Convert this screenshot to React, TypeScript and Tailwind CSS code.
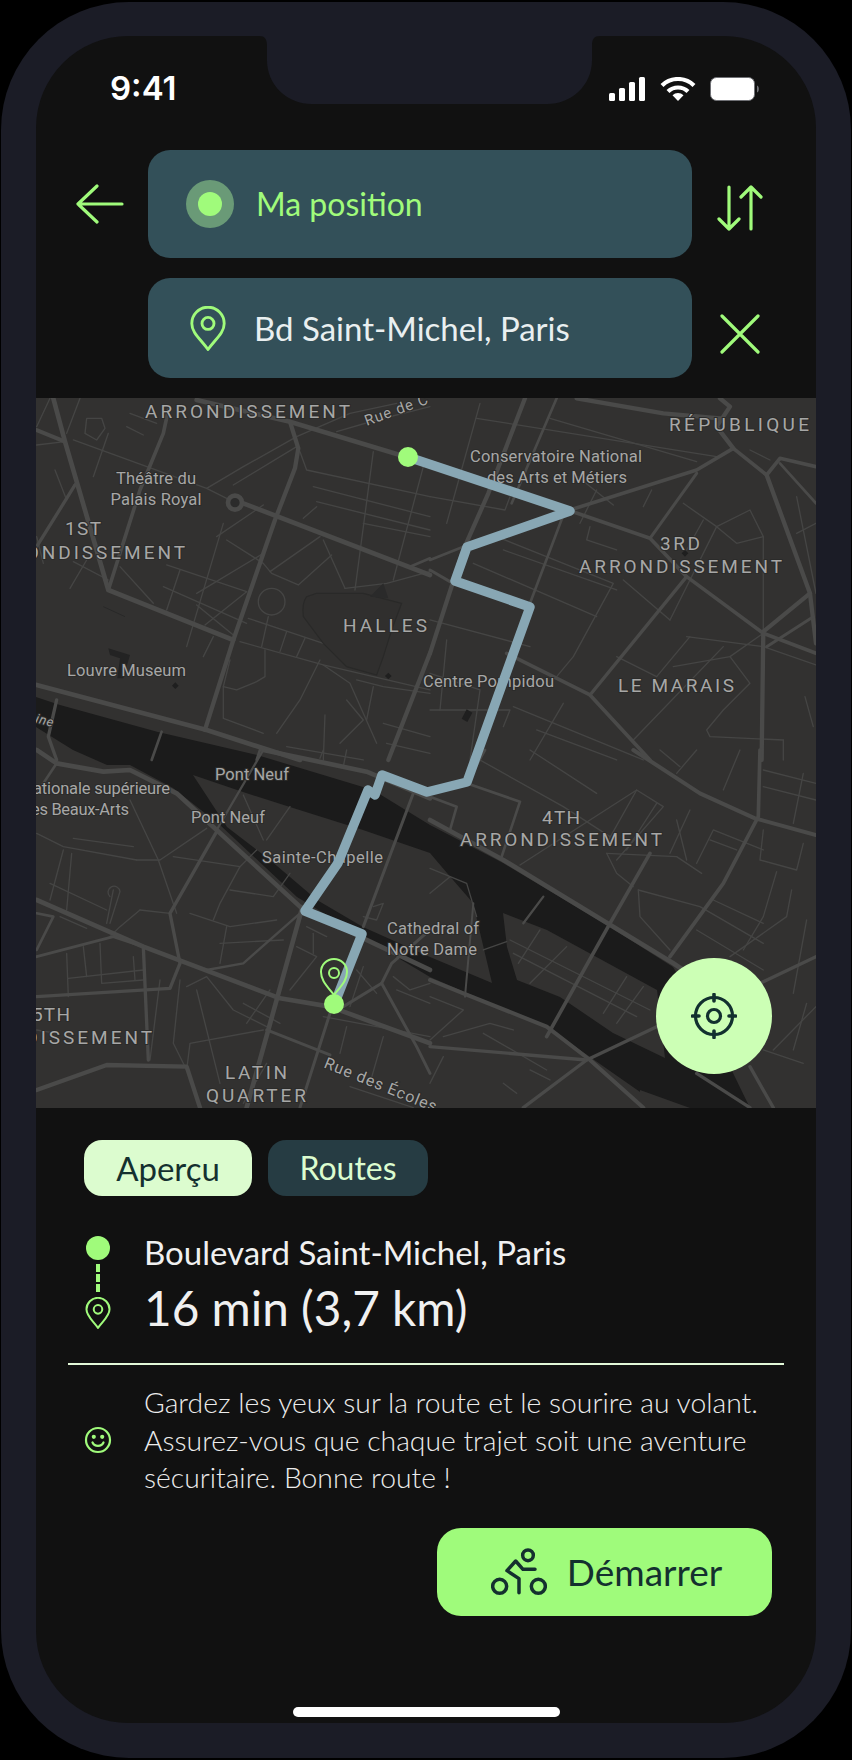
const MAJOR = "#4a4a49";
const MINOR = "#454544";

type Layer = { o: [number, number]; thick: [string, number][]; thin: string[] };

const layers: Layer[] = [
  {
    o: [30, 390],
    thick: [
      ["M70 25 L105 155 L235 600 L610 750", 14],
      ["M20 120 L105 155", 12],
      ["M415 60 L400 130 L330 300 L235 600", 11],
      ["M135 285 L20 470", 10],
      ["M500 30 L780 95 L1110 195", 14],
      ["M780 95 L805 175 L795 235 L735 390 L610 750 L525 1020", 13],
      ["M640 340 L1200 555", 14],
      ["M1140 530 L1200 505", 8],
      ["M1200 790 L1075 1110", 13],
      ["M20 885 L530 1020 L700 1075 L810 1110", 14],
      ["M80 930 L55 1040 L80 1110", 10],
      ["M395 1025 L365 1110", 8],
      ["M690 1080 L680 1110", 8],
    ],
    thin: [
      "M170 85 L215 85 L225 115 L200 150 L165 130 Z",
      "M20 165 L105 155", "M130 150 L530 295 L590 325", "M235 130 L190 260", "M290 110 L340 135", "M300 70 L380 100",
      "M150 25 L110 130", "M20 110 L60 25", "M75 240 L110 330 L135 280", "M20 440 L40 520",
      "M530 295 L640 230 L800 140 L960 70 L1100 40", "M610 285 L800 170", "M920 125 L1040 90 L1200 50",
      "M810 185 L830 240 L1200 320", "M850 290 L1200 380", "M860 335 L1200 420", "M1000 400 L1200 440",
      "M820 385 L860 350", "M880 450 L945 595", "M1030 185 L975 600", "M1180 230 L1090 570",
      "M120 595 L170 510", "M130 515 L235 570", "M270 530 L370 640", "M410 525 L650 605", "M450 540 L410 660",
      "M400 590 L650 700", "M580 400 L470 770", "M560 440 L700 345", "M590 450 L700 520 L725 550 L805 585 L905 495",
      "M720 545 L870 440", "M500 610 L700 490", "M525 705 L650 605", "M500 645 L610 735", "M550 740 L520 800",
      "M945 595 L1070 580 L1200 545", "M630 755 L880 825 L1200 900", "M655 685 L880 760", "M715 680 L695 770",
      "M770 725 L750 785", "M825 745 L800 800", "M705 780 L705 860 L680 875 L620 900 L580 890 L600 810",
      "M580 890 L580 985 L700 1030", "M870 810 L810 930 L740 1030", "M880 825 L960 880 L1040 1060",
      "M1200 910 L1060 890 L980 870", "M1030 890 L1010 990", "M950 930 L1000 990 L930 1060", "M885 975 L880 1110",
      "M1060 1000 L1200 1040", "M1070 1060 L1200 1090", "M770 1070 L1000 1110",
      "M685 635 A40 40 0 1 1 765 635 A40 40 0 1 1 685 635",
    ],
  },
  {
    o: [430, 390],
    thick: [
      ["M285 25 L175 310 L100 480 L0 790", 13],
      ["M380 25 L245 340", 8],
      ["M400 375 L300 640", 8],
      ["M420 362 L660 445 L770 560 L1000 730 L1158 790", 11],
      ["M420 360 L800 240 L910 175", 11],
      ["M660 445 L800 250", 9],
      ["M910 175 L860 110 L900 50 L870 25", 13],
      ["M910 175 L1010 255 L1050 205 L1158 230", 11],
      ["M1010 255 L1140 610 L1158 760", 13],
      ["M1050 220 L1158 340", 8],
      ["M770 560 L480 915", 10],
      ["M0 540 L60 575", 9],
      ["M230 790 L480 915 L660 1110", 11],
      ["M1140 610 L1000 725 L995 1110", 13],
      ["M1150 680 L1010 770", 9],
      ["M440 25 L700 70 L870 85", 13],
      ["M0 510 L100 470", 8],
    ],
    thin: [
      "M140 85 L860 200", "M360 85 L800 215", "M150 40 L50 400", "M430 250 L550 345", "M665 300 L640 350",
      "M480 410 L470 450 L560 480", "M500 300 L450 400", "M0 320 L225 360 L240 320", "M200 440 L550 580 L430 800 L380 860",
      "M130 520 L500 680", "M220 480 L560 600", "M720 690 L860 410 L920 460 L1000 440 L960 360 L860 410",
      "M770 740 L1000 770 L1158 825", "M0 690 L300 770", "M580 570 L720 690", "M1000 440 L1000 720", "M860 410 L760 340",
      "M820 390 L770 480", "M730 830 L900 800 L1000 730", "M900 800 L960 880 L880 960 L830 1020 L840 1040 L1060 1050",
      "M610 1050 L880 770", "M680 860 L780 740", "M560 800 L680 860", "M400 940 L300 1110", "M250 950 L640 1110",
      "M320 1020 L560 1110", "M1100 320 L1158 610", "M1100 430 L1158 400", "M1125 920 L1150 1010", "M1060 1050 L1060 1110",
      "M50 750 L30 960", "M0 960 L240 960 L220 1010", "M0 850 L150 900 L120 1110", "M960 180 L1020 210",
    ],
  },
  {
    o: [30, 750],
    thick: [
      ["M20 0 L80 40 L220 65 L300 60 L440 130 L560 240 L810 470 L1000 565 L1200 660", 14],
      ["M700 0 L1010 65 L1200 145", 14],
      ["M20 450 L340 590 L750 745 L900 770 L1200 880", 14],
      ["M20 620 L250 560 L340 590", 9],
      ["M20 740 L420 715 L450 640 L420 490 L560 245", 10],
      ["M340 590 L355 930", 10],
      ["M20 1020 L230 945 L470 950 L510 1073", 13],
      ["M815 480 L740 750 L650 1073", 14],
      ["M710 840 L900 915", 9],
      ["M900 790 L810 1073", 9],
      ["M1150 130 L1000 530", 9],
      ["M940 770 L1055 700 L1085 640 L1200 540", 9],
      ["M1055 700 L1160 890 L1200 970", 9],
      ["M530 660 L640 640 L810 490", 7],
      ["M20 490 L70 500 L20 600", 8],
      ["M700 0 L560 240", 7],
      ["M80 40 L20 130", 8],
    ],
    thin: [
      "M130 265 L310 290", "M100 300 L60 450", "M125 310 L110 480", "M320 330 L390 330 L530 235", "M300 150 L385 330 L440 490",
      "M430 320 L630 350 L680 300", "M630 350 L570 460 L550 510", "M480 490 L600 530 L740 510", "M590 530 L570 640",
      "M570 580 L760 570", "M600 420 L730 440 L780 370", "M20 250 L100 290 L320 330", "M60 400 L230 480", "M250 420 L230 520",
      "M330 480 L420 490", "M330 480 L270 530 L240 560", "M90 500 L170 535", "M110 610 L115 740", "M160 590 L170 680",
      "M210 580 L215 700 L340 690", "M115 685 L340 660", "M310 620 L315 690", "M390 690 L360 930",
      "M450 690 L430 880 L470 960 L480 880 L700 840", "M500 720 L570 1000", "M470 710 L530 680 L610 780 L710 830",
      "M640 760 L750 820", "M650 820 L720 720", "M830 530 L890 560", "M850 550 L850 610", "M800 590 L860 620 L780 720",
      "M980 660 L1040 730", "M1000 650 L960 770", "M880 800 L1200 860", "M950 830 L930 910", "M1060 860 L1020 1000",
      "M960 1010 L1150 1073", "M1100 720 L1200 760", "M1090 680 L1140 720 L1200 700", "M640 135 L700 270",
      "M780 170 L710 270", "M1030 470 L1060 460 L1040 510 L1000 500", "M880 0 L870 25", "M950 0 L940 50",
      "M240 440 A18 18 0 1 1 270 425 L240 520", "M20 840 L80 850", "M640 1060 L710 940",
    ],
  },
  {
    o: [430, 750],
    thick: [
      ["M0 210 L220 330 L730 640 L760 660", 14],
      ["M610 0 L810 130 L975 205 L1158 255", 12],
      ["M990 0 L985 200 L880 400 L720 620", 11],
      ["M660 310 L540 520 L350 860", 11],
      ["M0 140 L80 170 L60 240", 8],
      ["M110 100 L270 155 L215 320", 8],
      ["M340 440 L280 520", 7],
      ["M0 690 L100 730 L350 830 L480 930 L640 1073", 12],
      ["M0 890 L470 930 L280 1073", 10],
      ["M470 930 L680 830", 10],
      ["M990 700 L1158 620", 10],
      ["M960 950 L1030 1073", 10],
      ["M800 970 L960 1073", 10],
      ["M165 0 L110 100 L0 130", 8],
      ["M130 460 L105 740", 6],
    ],
    thin: [
      "M160 600 L230 575", "M240 570 L660 780", "M265 640 L330 540", "M300 700 L410 590", "M250 610 L620 800",
      "M520 790 L590 680", "M560 820 L640 710", "M270 345 L620 120 L700 170 L560 330", "M150 30 L400 170 L540 260",
      "M300 0 L500 130", "M620 120 L530 280", "M680 160 L590 300", "M780 180 L720 310", "M740 210 L770 330",
      "M530 310 L740 320 L815 370", "M530 310 L560 370 L610 410", "M625 420 L630 500 L720 600", "M625 420 L810 470 L1000 580",
      "M1040 365 L1000 500 L940 600", "M800 540 L1000 660", "M840 270 L920 300", "M800 340 L850 240 L1000 300",
      "M1000 240 L990 330 L1100 360 L1120 280", "M1000 110 L1158 150", "M1000 60 L1158 100", "M1120 70 L1090 220",
      "M1130 510 L1090 730", "M1085 420 L1070 500 L900 620", "M850 450 L1000 520", "M1000 900 L1120 940", "M1030 900 L1158 770",
      "M0 870 L100 780 L0 740", "M40 860 L180 820 L250 840", "M160 850 L350 960", "M40 920 L0 1000", "M300 960 L360 990",
      "M220 1000 L260 1030", "M750 50 L690 0", "M800 0 L740 70", "M930 0 L880 120", "M1090 900 L1130 760",
      "M0 355 L110 400 L140 500", "M0 430 L60 380",
    ],
  },
];

const labels: { s: string; x: number; y: number; w: number; f: number; a?: "start" | "middle" | "end"; r?: number; i?: boolean }[] = [
  { s: "ARRONDISSEMENT", x: 145, y: 411, w: 205, f: 19 },
  { s: "Rue de C", x: 365, y: 421, w: 66, f: 15, r: -20 },
  { s: "Théâtre du", x: 156, y: 478, w: 80, f: 16.5, a: "middle" },
  { s: "Palais Royal", x: 156, y: 499, w: 91, f: 16.5, a: "middle" },
  { s: "1ST", x: 83, y: 528, w: 36, f: 19, a: "middle" },
  { s: "ARRONDISSEMENT", x: -19, y: 552, w: 204, f: 19 },
  { s: "HALLES", x: 343, y: 625, w: 84, f: 19 },
  { s: "Louvre Museum", x: 67, y: 670, w: 119, f: 16.5 },
  { s: "Centre Pompidou", x: 423, y: 681, w: 131, f: 16.5 },
  { s: "Conservatoire National", x: 470, y: 456, w: 172, f: 16.5 },
  { s: "des Arts et Métiers", x: 487, y: 477, w: 140, f: 16.5 },
  { s: "RÉPUBLIQUE", x: 669, y: 424, w: 140, f: 19 },
  { s: "3RD", x: 680, y: 543, w: 40, f: 19, a: "middle" },
  { s: "ARRONDISSEMENT", x: 579, y: 566, w: 203, f: 19 },
  { s: "LE MARAIS", x: 618, y: 685, w: 116, f: 19 },
  { s: "Pont Neuf", x: 215, y: 774, w: 74, f: 16.5 },
  { s: "École nationale supérieure", x: -19, y: 788, w: 189, f: 16.5 },
  { s: "des Beaux-Arts", x: 22, y: 809, w: 107, f: 16.5 },
  { s: "Pont Neuf", x: 191, y: 817, w: 74, f: 16.5 },
  { s: "Sainte-Chapelle", x: 262, y: 857, w: 121, f: 16.5 },
  { s: "Cathedral of", x: 387, y: 928, w: 92, f: 16.5 },
  { s: "Notre Dame", x: 387, y: 949, w: 90, f: 16.5 },
  { s: "15TH", x: 20, y: 1014, w: 50, f: 19 },
  { s: "ARRONDISSEMENT", x: -52, y: 1037, w: 204, f: 19 },
  { s: "LATIN", x: 225, y: 1072, w: 62, f: 19 },
  { s: "QUARTER", x: 206, y: 1095, w: 100, f: 19 },
  { s: "Rue des Écoles", x: 325, y: 1062, w: 120, f: 16, r: 22 },
  { s: "4TH", x: 561, y: 817, w: 38, f: 19, a: "middle" },
  { s: "ARRONDISSEMENT", x: 460, y: 839, w: 202, f: 19 },
  { s: "ine", x: 36, y: 718, w: 18, f: 13, r: 15, i: true },
];

function MapDrawing() {
  return (
    <svg viewBox="36 398 780 710" width="780" height="710" className="block" fontFamily="Roboto, sans-serif">
      <rect x="36" y="398" width="780" height="710" fill="#323130" />
      <path
        d="M36 697 L60 705 L158 732 L257 755 L373 790 L430 825 L503 863 L610 927 L673 967 L717 1040 L750 1108 L663 1108 L590 1057 L547 1027 L467 993 L430 977 L363 937 L297 897 L220 825 L173 788 L130 765 L107 765 L73 750 L36 727 Z"
        fill="#1b1b1b"
      />
      <path
        d="M193 775 L243 792 L290 807 L363 830 L430 853 L447 873 L473 903 L492 983 L430 957 L363 927 L317 900 L270 860 L227 827 Z"
        fill="#323130"
      />
      <path d="M503 913 L547 930 L657 990 L665 1058 L613 1033 L560 997 L517 980 L507 947 Z" fill="#323130" />
      <path d="M640 1090 L690 1108 L640 1108 Z" fill="#323130" />
      {layers.map((l, i) => (
        <g key={i} transform={`translate(${l.o[0]} ${l.o[1]}) scale(0.3333)`} fill="none" strokeLinejoin="round" strokeLinecap="round">
          {l.thin.map((d, j) => (
            <path key={j} d={d} stroke={MINOR} strokeWidth={4} />
          ))}
          {l.thick.map(([d, w], j) => (
            <path key={j} d={d} stroke={MAJOR} strokeWidth={w} />
          ))}
        </g>
      ))}
      <g transform="translate(30 390) scale(0.3333)">
        <circle cx="615" cy="338" r="21" fill="#2b2b2b" stroke={MAJOR} strokeWidth="14" />
        <path
          d="M830 620 Q815 640 820 680 L880 760 L950 830 L1040 855 L1060 800 L1085 720 L1115 640 L1000 610 L860 610 Z"
          fill="#302f2e"
          stroke="#292928"
          strokeWidth="3.5"
        />
        <path d="M1020 620 L1060 580 L1075 625 Z" fill="#2a2a2a" />
        <path d="M235 775 L300 795 L280 865 L262 865 L270 805 L240 795 Z" fill="#232323" />
        <path d="M436 877 L446 887 L436 897 L426 887 Z M1075 848 L1085 858 L1075 868 L1065 858 Z" fill="#1f1f1f" />
        <path d="M220 650 L285 680" stroke="#282828" strokeWidth="3" />
      </g>
      <g transform="translate(430 390) scale(0.3333)">
        <path d="M110 958 L127 968 L112 996 L95 986 Z M765 480 L775 490 L765 500 L755 490 Z" fill="#1f1f1f" />
      </g>
      {labels.map((l, i) => (
        <text
          key={i}
          x={l.x}
          y={l.y + l.f * 0.35}
          fontSize={l.f}
          fill="#a7a7a6"
          stroke="#2b2b2a"
          strokeWidth="2"
          paintOrder="stroke"
          textAnchor={l.a ?? "start"}
          textLength={l.w}
          lengthAdjust="spacing"
          fontStyle={l.i ? "italic" : "normal"}
          transform={l.r ? `rotate(${l.r} ${l.x} ${l.y})` : undefined}
        >
          {l.s}
        </text>
      ))}
      <polyline
        points="408,457 570,511 467,547 455,581 530,607 467,782 427,792 382,775 375,795 368,790 338,863 305,911 362,934 336,1000"
        fill="none"
        stroke="#88a7b4"
        strokeWidth="9.5"
        strokeLinejoin="round"
        strokeLinecap="round"
      />
      <path
        d="M334 995 C326 985 321 980 321 972 A13 13 0 0 1 347 972 C347 980 342 985 334 995 Z"
        fill="none"
        stroke="#a0fb7b"
        strokeWidth="2"
      />
      <circle cx="334" cy="973" r="5" fill="none" stroke="#a0fb7b" strokeWidth="2" />
      <circle cx="408" cy="457" r="10" fill="#a0fb7b" />
      <circle cx="334" cy="1004" r="10" fill="#a0fb7b" />
    </svg>
  );
}

function Pin({ w, h, stroke = 2.2 }: { w: number; h: number; stroke?: number }) {
  return (
    <svg width={w} height={h} viewBox="0 0 24 30" fill="none" stroke="#a0fb7b" strokeWidth={stroke}>
      <path d="M12 29 C7 22 1.2 18 1.2 11.6 A10.8 10.8 0 0 1 22.8 11.6 C22.8 18 17 22 12 29 Z" strokeLinejoin="round" />
      <circle cx="12" cy="11.6" r="4" />
    </svg>
  );
}

export default function App() {
  return (
    <div className="w-[852px] h-[1760px] bg-black pt-[2px] px-[1px] font-['Lato',sans-serif]">
      <div className="h-[1756px] rounded-[128px] bg-[#1b1c26] pt-[34px] px-[35px]">
        <div className="relative h-[1687px] w-[780px] rounded-[92px] bg-[#111111] overflow-hidden">
          <svg className="absolute top-0 left-[223px]" width="341" height="68" viewBox="0 0 341 68" fill="#1b1c26">
            <path d="M0 0 H341 C335 0 333 3 333 10 V24 C333 50 312 68 288 68 H53 C29 68 8 50 8 24 V10 C8 3 6 0 0 0 Z" />
          </svg>

          <div className="h-[104px] flex items-end justify-between pl-[74px] pr-[54px] pb-[34px]">
            <span className="text-[33px] leading-[36px] font-semibold text-white font-['Inter',sans-serif]">9:41</span>
            <div className="flex items-center gap-[15px] h-[24px] mb-[5px]">
              <svg width="36" height="24" viewBox="0 0 36 24" fill="#ffffff">
                <rect x="0" y="16" width="6" height="8" rx="1.5" />
                <rect x="10" y="11" width="6" height="13" rx="1.5" />
                <rect x="20" y="5" width="6" height="19" rx="1.5" />
                <rect x="30" y="0" width="6" height="24" rx="1.5" />
              </svg>
              <svg width="36" height="24" viewBox="0 0 36 24" fill="none" stroke="#ffffff" strokeWidth="4.2">
                <path d="M2 8.5 A23 23 0 0 1 34 8.5" />
                <path d="M8 14.5 A14.5 14.5 0 0 1 28 14.5" />
                <path d="M18 24 L12.5 18.2 A8 8 0 0 1 23.5 18.2 Z" fill="#ffffff" stroke="none" />
              </svg>
              <svg width="52" height="24" viewBox="0 0 52 24" className="-ml-[1px]">
                <rect x="0.5" y="0.5" width="44" height="23" rx="6" fill="#ffffff" stroke="#6f7075" />
                <path d="M47 8.5 C49.5 9.2 49.5 14.8 47 15.5 Z" fill="#6f7075" />
              </svg>
            </div>
          </div>

          <div className="mt-[10px] flex items-center h-[108px]">
            <div className="w-[112px] pl-[40px] shrink-0">
              <svg width="48" height="40" viewBox="0 0 48 40" fill="none" stroke="#a0fb7b" strokeWidth="3.2" strokeLinecap="round" strokeLinejoin="round">
                <path d="M21 2 L2 20 L21 38 M2 20 H46" />
              </svg>
            </div>
            <div className="w-[544px] h-[108px] rounded-[22px] bg-[#335059] flex items-center pl-[38px]">
              <div className="w-[48px] h-[48px] rounded-full bg-[#6a9a77] flex items-center justify-center">
                <div className="w-[24px] h-[24px] rounded-full bg-[#a0fb7b]" />
              </div>
              <span className="ml-[22px] text-[32px] leading-[40px] text-[#a0fb7b]">Ma position</span>
            </div>
            <div className="pl-[25px] pt-[8px]">
              <svg width="46" height="46" viewBox="0 0 46 46" fill="none" stroke="#a0fb7b" strokeWidth="3.2" strokeLinecap="round" strokeLinejoin="round">
                <path d="M12 2 V44 M2 34 L12 44 L22 34 M34 44 V2 M24 12 L34 2 L44 12" />
              </svg>
            </div>
          </div>

          <div className="mt-[20px] flex items-center h-[100px]">
            <div className="ml-[112px] w-[544px] h-[100px] rounded-[22px] bg-[#335059] flex items-center pl-[42px]">
              <Pin w={36} h={45} stroke={1.9} />
              <span className="ml-[28px] text-[33px] leading-[40px] text-[#e9eff0]">Bd Saint-Michel, Paris</span>
            </div>
            <div className="pl-[28px] pt-[12px]">
              <svg width="40" height="40" viewBox="0 0 40 40" fill="none" stroke="#a0fb7b" strokeWidth="3.2" strokeLinecap="round">
                <path d="M2 2 L38 38 M38 2 L2 38" />
              </svg>
            </div>
          </div>

          <div className="relative mt-[20px] h-[710px]">
            <MapDrawing />
            <div className="absolute left-[620px] top-[560px] w-[116px] h-[116px] rounded-full bg-[#ccffb5] flex items-center justify-center">
              <svg width="46" height="46" viewBox="0 0 46 46" fill="none" stroke="#12302f" strokeWidth="3.2" strokeLinecap="round">
                <circle cx="23" cy="23" r="18.5" />
                <circle cx="23" cy="23" r="6.5" />
                <path d="M23 1.5 V8 M23 38 V44.5 M1.5 23 H8 M38 23 H44.5" strokeWidth="3.6" />
              </svg>
            </div>
          </div>

          <div className="pt-[32px] pl-[48px] flex gap-[16px]">
            <div className="w-[168px] h-[56px] rounded-[18px] bg-[#dcfccf] flex items-center justify-center text-[33px] leading-[40px] text-[#14302f]">Aperçu</div>
            <div className="w-[160px] h-[56px] rounded-[18px] bg-[#263c43] flex items-center justify-center text-[32px] leading-[40px] text-[#dcfccf]">Routes</div>
          </div>

          <div className="mt-[40px] flex">
            <div className="ml-[50px] w-[24px] flex flex-col items-center shrink-0">
              <div className="w-[24px] h-[24px] rounded-full bg-[#a0fb7b]" />
              <div className="mt-[4px] h-[28px] border-l-[4px] border-dashed border-[#a0fb7b]" />
              <div className="mt-[5px] flex">
                <Pin w={26} h={32} stroke={1.9} />
              </div>
            </div>
            <div className="ml-[34px] flex flex-col">
              <span className="-mt-[2px] text-[33px] leading-[36px] text-[#f0f0f0]">Boulevard Saint-Michel, Paris</span>
              <span className="mt-[9px] text-[47.7px] leading-[58px] text-[#f0f0f0]">16 min (3,7 km)</span>
            </div>
          </div>

          <div className="ml-[32px] mt-[26px] w-[716px] h-[2px] bg-[#e2f8d8]" />

          <div className="mt-[19px] flex items-center">
            <div className="ml-[48px] w-[28px] shrink-0">
              <svg width="28" height="28" viewBox="0 0 28 28" fill="none" stroke="#a0fb7b" strokeWidth="2.2" strokeLinecap="round">
                <circle cx="14" cy="14" r="12" />
                <path d="M8.5 16.5 C10.5 21 17.5 21 19.5 16.5" />
                <circle cx="9.8" cy="10.8" r="1" fill="#a0fb7b" />
                <circle cx="18.2" cy="10.8" r="1" fill="#a0fb7b" />
              </svg>
            </div>
            <p className="ml-[32px] w-[660px] text-[28.3px] leading-[37.5px] font-light text-[#ececec]">
              Gardez les yeux sur la route et le sourire au volant.<br />
              Assurez-vous que chaque trajet soit une aventure<br />
              sécuritaire. Bonne route !
            </p>
          </div>

          <div className="mt-[31px] ml-[401px] w-[335px] h-[88px] rounded-[24px] bg-[#9ffb7b] flex items-center justify-center gap-[20px] text-[#14302f]">
            <svg className="ml-[4px]" width="56" height="48" viewBox="210 438 168 144" fill="none" stroke="#14302f" strokeWidth="10.5" strokeLinecap="round" strokeLinejoin="round">
              <circle cx="236" cy="553" r="21" />
              <circle cx="352" cy="553" r="21" />
              <circle cx="321" cy="460" r="16" />
              <path d="M342 502 H306 L284 477 L258 506 L294 530 V572" />
            </svg>
            <span className="text-[37px] leading-[44px]">Démarrer</span>
          </div>

          <div className="mt-[91px] mx-auto w-[267px] h-[10px] rounded-full bg-white" />
        </div>
      </div>
    </div>
  );
}
